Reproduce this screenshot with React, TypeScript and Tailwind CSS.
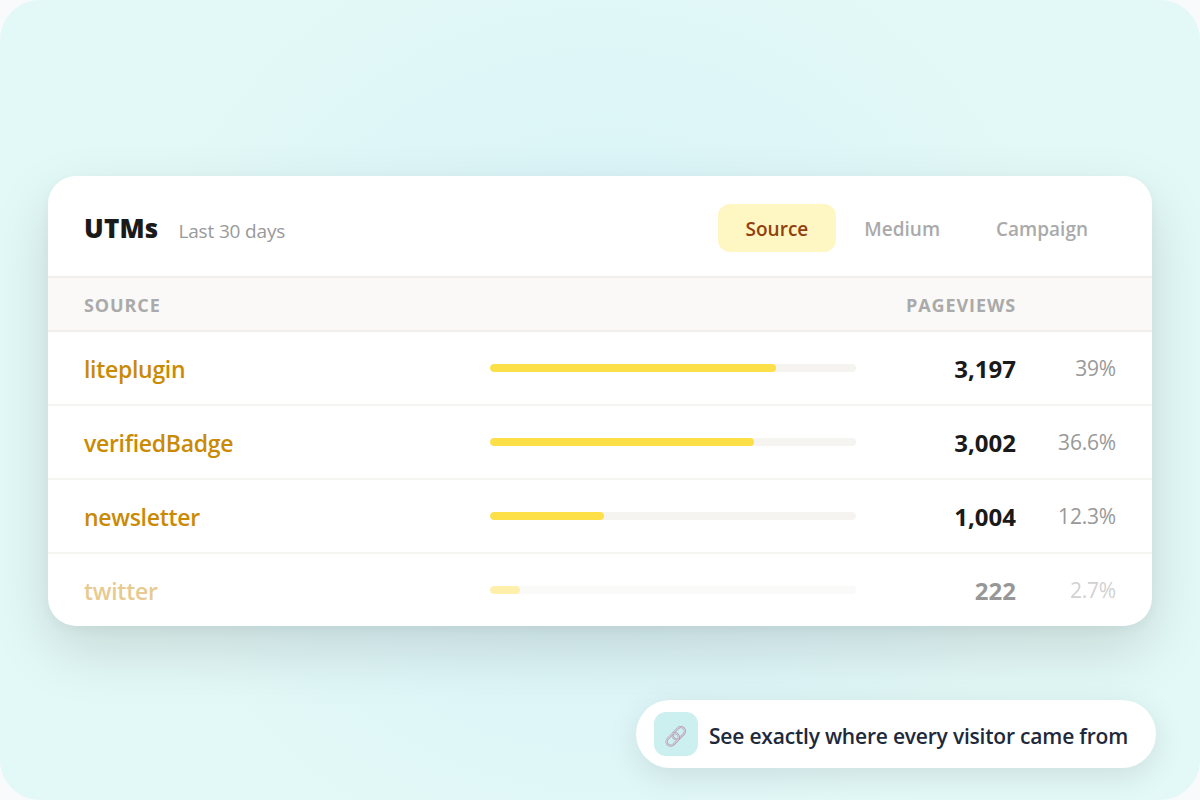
const tabs = ["Source", "Medium", "Campaign"];

const rows = [
    { name: "liteplugin", views: "3,197", percent: "39%", bar: 286 },
    { name: "verifiedBadge", views: "3,002", percent: "36.6%", bar: 264 },
    { name: "newsletter", views: "1,004", percent: "12.3%", bar: 114 },
    { name: "twitter", views: "222", percent: "2.7%", bar: 30, faded: true },
];

function LinkIcon() {
    return (
        <svg className="h-6 w-6 overflow-visible" viewBox="0 0 24 24" fill="none">
            <g transform="rotate(-45 12 12)">
                <rect x="8.9" y="8" width="14" height="8" rx="4" stroke="#a698ac" strokeWidth="2.2" />
                <rect x="8.8" y="7.8" width="14" height="8" rx="4" stroke="#d6c8da" strokeWidth="1.3" />
                <rect x="0.2" y="8.2" width="14" height="8" rx="4" stroke="#a698ac" strokeWidth="2.2" />
                <rect x="0.1" y="8" width="14" height="8" rx="4" stroke="#d6c8da" strokeWidth="1.3" />
            </g>
        </svg>
    );
}

export default function App() {
    return (
        <div className="h-screen w-screen overflow-hidden bg-[#f8fafc] font-['Open_Sans',sans-serif]">
            <div className="flex h-full flex-col overflow-hidden rounded-[40px] bg-[#e3f9f7] bg-[radial-gradient(circle_505px_at_center,#d6f1f8,#e3f9f7)] px-12 pt-44">
                <div className="h-[450px] shrink-0 overflow-hidden rounded-[28px] bg-white shadow-[0_24px_60px_rgba(0,0,0,0.13),0_4px_12px_rgba(0,0,0,0.04)]">
                    <div className="flex h-[102px] items-center justify-between border-b-2 border-[#f0efed] px-9 pt-1">
                        <div className="flex items-baseline gap-5">
                            <h2 className="text-[26px] leading-9 font-extrabold tracking-[0.2px] text-[#1a1a1a]">
                                UTMs
                            </h2>
                            <span className="text-[19px] tracking-[-0.15px] text-[#999]">Last 30 days</span>
                        </div>
                        <div className="flex">
                            {tabs.map((tab, i) => (
                                <button
                                    key={tab}
                                    className={
                                        "h-12 rounded-xl px-7 pt-0.5 text-[19px] font-semibold " +
                                        (i === 0 ? "bg-[#fef7c3] text-[#92400e]" : "text-[#aaa]")
                                    }
                                >
                                    {tab}
                                </button>
                            ))}
                        </div>
                    </div>

                    <div className="flex h-[54px] items-center border-b-2 border-[#f0efed] bg-[#faf9f7] px-9 pt-0.5 text-[18px] font-bold tracking-[0.9px] text-[#aaa]">
                        <span className="flex-1">SOURCE</span>
                        <span className="mr-[100px]">PAGEVIEWS</span>
                    </div>

                    {rows.map((row) => (
                        <div key={row.name} className="h-[74px] border-b-2 border-[#f5f4f1] px-9 last:border-b-0">
                            <div className={"flex h-[72px] items-center " + (row.faded ? "opacity-45" : "")}>
                                <span className="w-[406px] pt-0.5 text-[23px] font-semibold tracking-[-0.3px] text-[#ca8a04]">
                                    {row.name}
                                </span>
                                <div className="h-2 w-[366px] overflow-hidden rounded-full bg-[#f5f4f1]">
                                    <div
                                        className="h-full rounded-full bg-[#fde047]"
                                        style={{ width: row.bar }}
                                    />
                                </div>
                                <span className="w-40 pt-0.5 text-right text-[24px] font-bold text-[#1a1a1a]">
                                    {row.views}
                                </span>
                                <span className="w-[100px] pt-0.5 text-right text-[21px] tracking-[-0.2px] text-[#999]">
                                    {row.percent}
                                </span>
                            </div>
                        </div>
                    ))}
                </div>

                <div className="mt-[74px] -mr-1 flex h-[68px] w-[520px] shrink-0 items-center gap-[11px] self-end rounded-full bg-white pl-[18px] shadow-[0_8px_32px_rgba(0,0,0,0.1)]">
                    <div className="flex h-11 w-11 items-center justify-center rounded-xl bg-[#cbf0ef] pt-1">
                        <LinkIcon />
                    </div>
                    <span className="pt-1.5 text-[21px] font-semibold tracking-[-0.2px] whitespace-nowrap text-[#1e293b]">
                        See exactly where every visitor came from
                    </span>
                </div>
            </div>
        </div>
    );
}
